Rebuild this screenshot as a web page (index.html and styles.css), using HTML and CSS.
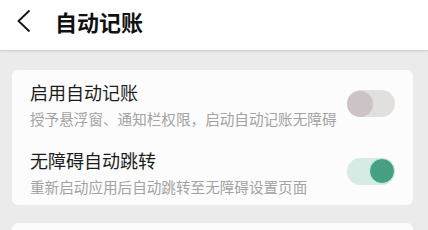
FILE: index.html
```html
<!DOCTYPE html>
<html lang="zh-CN">
<head>
  <meta charset="UTF-8">
  <title>自动记账</title>
  <link rel="stylesheet" href="styles.css">
</head>
<body>
  <div class="header">
    <svg class="back" width="14" height="24" viewBox="0 0 14 24">
      <polyline points="12.5,1.5 1.5,12 12.5,22.5" fill="none" stroke="#111" stroke-width="1.8"/>
    </svg>
    <div class="title">自动记账</div>
  </div>

  <div class="card">
    <div class="row">
      <div class="row-text">
        <div class="row-title">启用自动记账</div>
        <div class="row-sub">授予悬浮窗、通知栏权限，启动自动记账无障碍</div>
      </div>
      <div class="switch"><div class="knob"></div></div>
    </div>
    <div class="row">
      <div class="row-text">
        <div class="row-title">无障碍自动跳转</div>
        <div class="row-sub">重新启动应用后自动跳转至无障碍设置页面</div>
      </div>
      <div class="switch on"><div class="knob"></div></div>
    </div>
  </div>

  <div class="card next"></div>
</body>
</html>
```

FILE: styles.css
```css
body {
  margin: 0;
  padding: 0;
  background-color: #ebebeb;
  font-family: "Noto Sans CJK SC", "Noto Sans", sans-serif;
  overflow: hidden;
}

.header {
  height: 44px;
  padding: 6px 0 0 17px;
  background: #fff;
  display: flex;
  align-items: flex-start;
  box-shadow: 0 1px 2px rgba(0, 0, 0, 0.15);
}

.back {
  margin-top: 3px;
}

.title {
  margin-left: 24px;
  font-size: 22px;
  line-height: 30px;
  font-weight: bold;
  color: #111;
}

.card {
  margin: 20px 15px 0 12px;
  background: #fcfcfc;
  border-radius: 6px;
}

.card.next {
  margin-top: 18px;
  height: 7px;
  border-radius: 6px 6px 0 0;
}

.row {
  height: 67.5px;
  box-sizing: border-box;
  padding: 11px 18px 0 18px;
  display: flex;
  align-items: flex-start;
  justify-content: space-between;
}

.row-title {
  font-size: 18px;
  line-height: 23px;
  color: #1c1c1c;
}

.row-sub {
  margin-top: 5px;
  font-size: 14.6px;
  line-height: 19px;
  color: #a3a3a3;
}

.switch {
  margin-top: 9px;
  width: 48px;
  height: 27px;
  border-radius: 14px;
  background: #e2dfdf;
  display: flex;
  align-items: center;
}

.knob {
  width: 26px;
  height: 26px;
  border-radius: 50%;
  background: #cbc3c5;
}

.switch.on {
  background: #d5ebe4;
  justify-content: flex-end;
}

.switch.on .knob {
  width: 24px;
  height: 24px;
  background: #46a084;
  border: 1px solid #c4f0df;
}
```
